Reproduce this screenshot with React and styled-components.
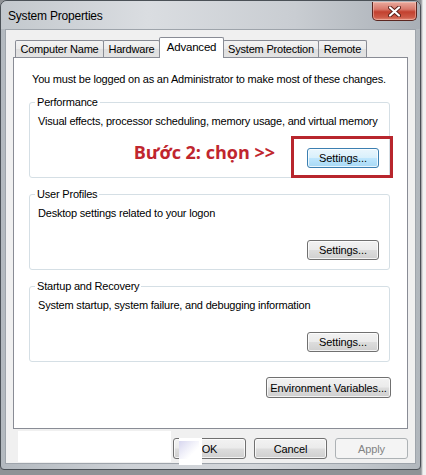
import React from "react";
import styled, { createGlobalStyle, css } from "styled-components";

const Global = createGlobalStyle`
  html, body { margin: 0; padding: 0; }
  body {
    background: #8f9296;
    font-family: "Liberation Sans", Arial, sans-serif;
    font-size: 11px;
    letter-spacing: -0.2px;
    color: #000;
    width: 426px;
    height: 475px;
    overflow: hidden;
  }
  #root { width: 426px; height: 475px; background: linear-gradient(to right, #8f9296 0, #8f9296 421px, #f2f2f2 423px); }
`;

const Window = styled.div`
  position: relative;
  box-sizing: border-box;
  width: 421px;
  height: 470px;
  border: 1px solid #4b5157;
  border-radius: 7px 7px 4px 4px;
  background: linear-gradient(to right, #b3b9bf 0%, #cdd1d6 30%, #d3d6da 60%, #c2c7cc 85%, #b1b7bd 100%);
  padding: 0 4px 5px 4px;
  display: flex;
  flex-direction: column;
`;

const TitleBar = styled.div`
  height: 28px;
  display: flex;
  align-items: flex-start;
  justify-content: space-between;
  background: linear-gradient(to right, #c3c8cd 0%, #dadde1 35%, #c9cdd2 70%, #a9afb6 100%);
  margin: 0 -4px;
  padding: 0 3px 0 7px;
  border-radius: 6px 6px 0 0;
`;

const Title = styled.span`
  font-size: 12px;
  line-height: 14px;
  margin-top: 8px;
  color: #000;
`;

const CloseButton = styled.div`
  width: 45px;
  height: 19px;
  margin-top: 1px;
  box-sizing: border-box;
  border: 1px solid #5b2620;
  border-top: none;
  border-radius: 0 0 5px 5px;
  background: linear-gradient(to bottom, #e9a99c 0%, #d9796c 40%, #c2412f 55%, #cd5a47 85%, #e08a78 100%);
  box-shadow: inset 0 0 0 1px rgba(255, 210, 200, 0.45);
  display: flex;
  align-items: center;
  justify-content: center;
`;

const Client = styled.div`
  flex: 1;
  box-sizing: border-box;
  border: 1px solid #9ea4ab;
  background: #f0f0f0;
  padding: 7px 7px 0 7px;
  display: flex;
  flex-direction: column;
`;

const TabBar = styled.div`
  height: 20px;
  display: flex;
  align-items: flex-end;
  padding-left: 2px;
`;

const Tab = styled.div`
  position: relative;
  box-sizing: border-box;
  width: ${(p) => p.$w}px;
  height: 17px;
  margin-left: -1px;
  border: 1px solid #898c95;
  border-bottom: none;
  border-radius: 2px 2px 0 0;
  background: linear-gradient(to bottom, #f3f3f3 0%, #ebebeb 50%, #dfdfdf 51%, #e3e3e3 100%);
  line-height: 16px;
  font-size: 11px;
  text-align: center;
  color: #000;
  white-space: nowrap;
  &:first-child { margin-left: 0; }
  ${(p) =>
    p.$active &&
    css`
      height: 21px;
      margin-bottom: -1px;
      z-index: 2;
      background: #fff;
      line-height: 18px;
      font-size: 11.5px;
    `}
`;

const Panel = styled.div`
  position: relative;
  z-index: 1;
  box-sizing: border-box;
  height: 372px;
  background: #fff;
  border: 1px solid #898c95;
  padding: 14px 17px 0 15px;
  display: flex;
  flex-direction: column;
`;

const Notice = styled.div`
  line-height: 14px;
  margin-left: 3px;
  white-space: nowrap;
`;

const Group = styled.fieldset`
  margin: 9px 0 0 0;
  padding: 5px 10px 9px 8px;
  border: 1px solid #d5dfe5;
  border-radius: 3px;
  min-inline-size: 0;
  display: flex;
  flex-direction: column;
`;

const Legend = styled.legend`
  margin-left: -3px;
  padding: 0 2px;
  line-height: 14px;
  font-size: 11px;
  color: #000;
`;

const Description = styled.div`
  line-height: 14px;
  white-space: nowrap;
`;

const ActionRow = styled.div`
  margin-top: 20px;
  display: flex;
  justify-content: flex-end;
  align-items: flex-start;
  gap: 32px;
`;

const Note = styled.span`
  font-family: "Open Sans", "Noto Sans", sans-serif;
  font-weight: 700;
  font-size: 18px;
  letter-spacing: 0;
  line-height: 20px;
  height: 14px;
  margin-top: -6px;
  color: #c0262e;
  white-space: nowrap;
`;

const Slot = styled.div`
  position: relative;
  display: flex;
`;

const RedFrame = styled.div`
  position: absolute;
  left: -16px;
  right: -14px;
  top: -12px;
  bottom: -10px;
  border: 3px solid #b8262d;
  pointer-events: none;
`;

const Button = styled.button`
  box-sizing: border-box;
  width: ${(p) => p.$w || 73}px;
  height: ${(p) => p.$h || 21}px;
  padding: 0;
  border: 1px solid #707070;
  border-radius: 3px;
  font-family: "Liberation Sans", Arial, sans-serif;
  font-size: 11px;
  letter-spacing: -0.1px;
  color: #000;
  background: linear-gradient(to bottom, #f2f2f2 0%, #ebebeb 48%, #dddddd 52%, #cfcfcf 100%);
  box-shadow: inset 0 0 0 1px rgba(255, 255, 255, 0.75);
  ${(p) =>
    p.$hot &&
    css`
      border-color: #3c7fb1;
      background: linear-gradient(to bottom, #eaf6fd 0%, #d9f0fc 48%, #bee6fd 52%, #a7d9f5 100%);
    `}
  ${(p) =>
    p.disabled &&
    css`
      border-color: #adb2b5;
      background: #f4f4f4;
      color: #838383;
      box-shadow: none;
    `}
`;

const EnvRow = styled.div`
  margin-top: 15px;
  display: flex;
  justify-content: flex-end;
  margin-right: -1px;
`;

const FooterRow = styled.div`
  margin-top: 9px;
  display: flex;
  justify-content: flex-end;
  gap: 8px;
`;

const WhitePatch = styled.div`
  position: absolute;
  background: #fff;
  left: ${(p) => p.$x}px;
  top: ${(p) => p.$y}px;
  width: ${(p) => p.$w}px;
  height: ${(p) => p.$h}px;
`;

const IconGhost = styled.div`
  position: absolute;
  left: 178px;
  top: 440px;
  width: 20px;
  height: 18px;
  background: linear-gradient(135deg, #d7d6ef 0%, #f2f2fa 45%, #ffffff 70%);
`;

function CloseGlyph() {
  return (
    <svg width="13" height="11" viewBox="0 0 13 11">
      <path d="M2 1.5 L11 9.5 M11 1.5 L2 9.5" stroke="#5a1f18" strokeWidth="4" strokeLinecap="round" />
      <path d="M2 1.5 L11 9.5 M11 1.5 L2 9.5" stroke="#ffffff" strokeWidth="2.2" strokeLinecap="round" />
    </svg>
  );
}

const tabs = [
  { label: "Computer Name", w: 89 },
  { label: "Hardware", w: 57 },
  { label: "Advanced", w: 65, active: true },
  { label: "System Protection", w: 96 },
  { label: "Remote", w: 49 },
];

export default function App() {
  return (
    <>
      <Global />
      <Window>
        <TitleBar>
          <Title>System Properties</Title>
          <CloseButton>
            <CloseGlyph />
          </CloseButton>
        </TitleBar>
        <Client>
          <TabBar>
            {tabs.map((t) => (
              <Tab key={t.label} $w={t.w} $active={t.active}>
                {t.label}
              </Tab>
            ))}
          </TabBar>
          <Panel>
            <Notice>You must be logged on as an Administrator to make most of these changes.</Notice>
            <Group>
              <Legend>Performance</Legend>
              <Description>Visual effects, processor scheduling, memory usage, and virtual memory</Description>
              <ActionRow>
                <Note>Bước 2: chọn &gt;&gt;</Note>
                <Slot>
                  <Button $w={72} $h={20} $hot>Settings...</Button>
                  <RedFrame />
                </Slot>
              </ActionRow>
            </Group>
            <Group>
              <Legend>User Profiles</Legend>
              <Description>Desktop settings related to your logon</Description>
              <ActionRow>
                <Button $w={72} $h={20}>Settings...</Button>
              </ActionRow>
            </Group>
            <Group>
              <Legend>Startup and Recovery</Legend>
              <Description>System startup, system failure, and debugging information</Description>
              <ActionRow>
                <Button $w={72} $h={20}>Settings...</Button>
              </ActionRow>
            </Group>
            <EnvRow>
              <Button $w={125} $h={21}>Environment Variables...</Button>
            </EnvRow>
          </Panel>
          <FooterRow>
            <Button>OK</Button>
            <Button>Cancel</Button>
            <Button disabled>Apply</Button>
          </FooterRow>
        </Client>
        <WhitePatch $x={17} $y={430} $w={153} $h={31} />
        <WhitePatch $x={178} $y={437} $w={23} $h={27} />
        <IconGhost />
      </Window>
    </>
  );
}
